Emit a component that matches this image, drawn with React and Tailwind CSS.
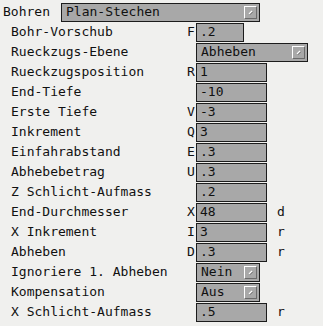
import React from "react";

const FONT = { fontFamily: '"DejaVu Sans Mono", "Liberation Mono", monospace' };

function Indicator() {
  return (
    <div className="ml-auto mr-[2px] w-[13px] h-[13px] border-l border-t border-white border-r border-b border-r-[#6a6a6a] border-b-[#6a6a6a] bg-[#a8a8a8] flex items-center justify-center">
      <svg width="7" height="7" viewBox="0 0 7 7">
        <line x1="2" y1="5" x2="5" y2="2" stroke="#ffffff" strokeWidth="1.2" />
        <line x1="2.8" y1="5.8" x2="5.8" y2="2.8" stroke="#555" strokeWidth="0.8" />
      </svg>
    </div>
  );
}

function Dropdown({ value, w }) {
  return (
    <div className={`${w} h-[19px] border border-[#1c1c1c] bg-[#a8a8a8] flex items-center pl-[4px] text-[13px] text-[#111]`}>
      <span>{value}</span>
      <Indicator />
    </div>
  );
}

function Entry({ value, w = "w-[71px]" }) {
  return (
    <div className={`${w} h-[19px] border border-[#1c1c1c] bg-[#a8a8a8] flex items-center pl-[3px] text-[13px] text-[#111]`}>
      {value}
    </div>
  );
}

const rows = [
  { label: "Bohr-Vorschub", code: "F", value: ".2", w: "w-[48px]" },
  { label: "Rueckzugs-Ebene", dropdown: "Abheben", dw: "w-[112px]" },
  { label: "Rueckzugsposition", code: "R", value: "1" },
  { label: "End-Tiefe", code: "", value: "-10" },
  { label: "Erste Tiefe", code: "V", value: "-3" },
  { label: "Inkrement", code: "Q", value: "3" },
  { label: "Einfahrabstand", code: "E", value: ".3" },
  { label: "Abhebebetrag", code: "U", value: ".3" },
  { label: "Z Schlicht-Aufmass", code: "", value: ".2" },
  { label: "End-Durchmesser", code: "X", value: "48", unit: "d" },
  { label: "X Inkrement", code: "I", value: "3", unit: "r" },
  { label: "Abheben", code: "D", value: ".3", unit: "r" },
  { label: "Ignoriere 1. Abheben", dropdown: "Nein", dw: "w-[64px]" },
  { label: "Kompensation", dropdown: "Aus", dw: "w-[64px]" },
  { label: "X Schlicht-Aufmass", code: "", value: ".5", unit: "r" },
];

export default function App() {
  return (
    <div className="w-[323px] h-[326px] bg-[#f0f0ee] text-[13px] text-[#111] pt-[2px]" style={FONT}>
      <div className="h-[20px] flex items-center">
        <div className="w-[61px] pl-[3px]">Bohren</div>
        <Dropdown value="Plan-Stechen" w="w-[199px]" />
      </div>
      {rows.map((r) => (
        <div key={r.label} className="h-[20px] flex items-center">
          <div className="w-[187px] pl-[11px] whitespace-pre">{r.label}</div>
          <div className="w-[9px]">{r.code}</div>
          {r.dropdown ? (
            <Dropdown value={r.dropdown} w={r.dw} />
          ) : (
            <Entry value={r.value} w={r.w} />
          )}
          {r.unit && <div className="ml-[10px]">{r.unit}</div>}
        </div>
      ))}
    </div>
  );
}
